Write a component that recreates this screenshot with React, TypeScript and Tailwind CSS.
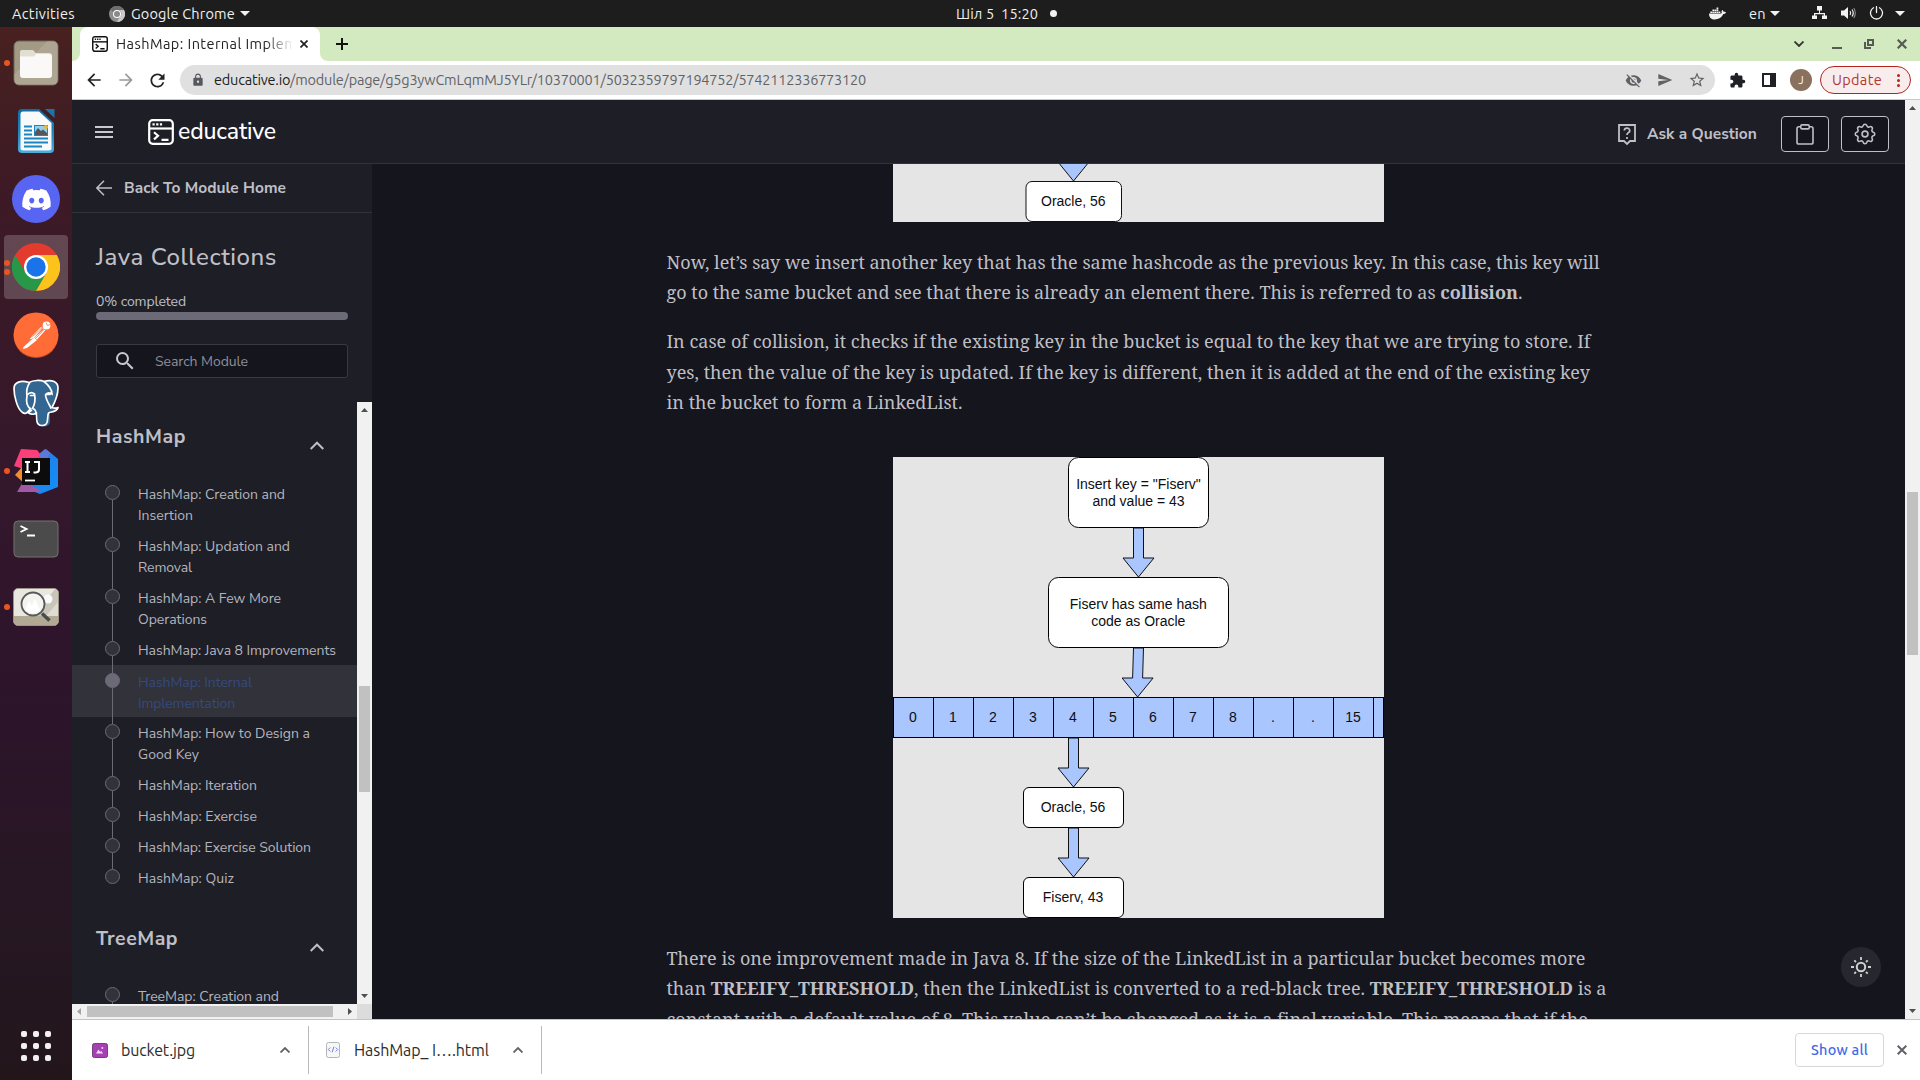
import { useLayoutEffect, useRef, type ReactNode } from "react";
import {
  MdArrowBack,
  MdArrowForward,
  MdExtension,
  MdLock,
  MdRefresh,
  MdSearch,
  MdSend,
  MdStarBorder,
  MdVisibilityOff,
} from "react-icons/md";
import { FaDiscord, FaDocker } from "react-icons/fa";

/** Single line of text whose tracking is adjusted so that it spans `w` pixels. */
function Fit({ w, className = "", children }: { w: number; className?: string; children: ReactNode }) {
  const ref = useRef<HTMLSpanElement>(null);
  useLayoutEffect(() => {
    const el = ref.current;
    if (!el) return;
    el.style.letterSpacing = "0px";
    const n = (el.textContent || "").length;
    el.style.letterSpacing = `${(w - el.getBoundingClientRect().width) / n}px`;
  }, [w]);
  return (
    <span ref={ref} className={`inline-block shrink-0 whitespace-pre ${className}`}>
      {children}
    </span>
  );
}

const UI = "font-['Ubuntu','Noto_Sans',sans-serif]";
const NUNITO = "font-['Nunito_Sans','Nunito','Lato',sans-serif]";

function Caret({ className = "" }: { className?: string }) {
  return (
    <svg className={`shrink-0 ${className}`} width="10" height="5" viewBox="0 0 10 5" fill="#f2f2f2">
      <path d="M0 0h10L5 5z" />
    </svg>
  );
}

function TopBar() {
  return (
    <div className={`flex h-[27px] shrink-0 items-center bg-[#1d1d1d] text-[14.5px] leading-[27px] text-[#f0f0f0] ${UI}`}>
      <div className="flex w-[956px] items-center">
        <Fit w={63} className="ml-3">Activities</Fit>
        <svg className="ml-[34px] shrink-0" width="16" height="16" viewBox="0 0 16 16">
          <circle cx="8" cy="8" r="8" fill="#8f8f8f" />
          <path d="M8 0a8 8 0 0 1 7 4H8a4 4 0 0 0-3.6 2.200L1.500 3.400A8 8 0 0 1 8 0z" fill="#6e6e6e" />
          <path d="M15 4a8 8 0 0 1-7 12l3.400-6A4 4 0 0 0 10.500 4z" fill="#c9c9c9" />
          <circle cx="8" cy="8" r="4" fill="#fff" />
          <circle cx="8" cy="8" r="3" fill="#8a8a8a" />
        </svg>
        <Fit w={104} className="ml-1.5">Google Chrome</Fit>
        <Caret className="ml-[5px]" />
      </div>
      <Fit w={82}>Шіл 5  15:20</Fit>
      <div className="ml-[12px] size-[7px] rounded-full bg-[#f2f2f2]" />
      <div className="ml-auto flex items-center pr-[15px]">
        <FaDocker className="text-[#f2f2f2]" size={17} />
        <Fit w={17} className="ml-[23px]">en</Fit>
        <Caret className="ml-1" />
        <svg className="ml-8 -mt-px" width="15" height="14" viewBox="0 0 15 14" fill="#f2f2f2">
          <path d="M5 0h5v4.500H8V7h5v2.500h2V13h-5V9.500h1.800V8.200H3.200v1.300H5V13H0V9.500h2V7h5V4.500H5z" />
        </svg>
        <svg className="ml-3.5 -mt-px" width="15" height="14" viewBox="0 0 15 14" fill="none" stroke="#f2f2f2" strokeWidth="1.200">
          <path d="M0 4.500h3L7 1v12L3 9.500H0z" fill="#f2f2f2" stroke="none" />
          <path d="M9 5q1.500 2 0 4M11 3.500q2.500 3.500 0 7" />
          <path d="M12.800 2q3 5 0 10" opacity=".5" />
        </svg>
        <svg className="ml-[13px] -mt-px" width="15" height="14" viewBox="0 0 15 14" fill="none" stroke="#f2f2f2" strokeWidth="1.300" strokeLinecap="round">
          <path d="M4.500 1.800a6 6 0 1 0 6 0M7.500 .600v6" />
        </svg>
        <Caret className="ml-[11px]" />
      </div>
    </div>
  );
}

function DockSlot({ dots = 0, active = false, children }: { dots?: number; active?: boolean; children: ReactNode }) {
  return (
    <div className="flex h-[68px] w-full shrink-0 items-center">
      <div className="flex w-1 shrink-0" />
      <div className={`relative flex size-16 items-center justify-center rounded-[4px] ${active ? "bg-white/20" : ""}`}>
        {children}
        <div className="absolute left-0 top-0 flex h-full flex-col justify-center gap-[3px]">
          {dots > 0 && <div className="size-[6px] rounded-full bg-[#e95420]" />}
          {dots > 1 && <div className="size-[6px] rounded-full bg-[#e95420]" />}
        </div>
      </div>
    </div>
  );
}

function Dock() {
  return (
    <div className="flex w-[72px] shrink-0 flex-col bg-[linear-gradient(#48211f,#3d1a25_15%,#35182b_40%,#2d142b_62%,#261723_85%,#22161b)] pt-[2px]">
      <DockSlot dots={1}>
        <svg width="46" height="46" viewBox="0 0 46 46">
          <rect x="1" y="1" width="44" height="44" rx="5" fill="#a39a86" stroke="#6f6758" />
          <path d="M1.500 34L34 1.500h6a4.500 4.500 0 0 1 4.500 4.500v34a4.500 4.500 0 0 1-4.500 4.500H6A4.500 4.500 0 0 1 1.500 40z" fill="#aea692" />
          <path d="M7 15V12q0-2 2-2h10q2 0 2.500 1.500L22.500 13H36q3 0 3 3v3H7z" fill="#e3ded2" />
          <path d="M7 16.500h14l2-2.500h13q3 0 3 3v18q0 3-3 3H10q-3 0-3-3z" fill="#faf9f7" />
        </svg>
      </DockSlot>
      <DockSlot>
        <svg width="38" height="46" viewBox="0 0 38 46">
          <defs>
            <linearGradient id="wr" x1="0" y1="0" x2="0" y2="1">
              <stop offset="0" stopColor="#0f6da4" />
              <stop offset=".55" stopColor="#1f85bd" />
              <stop offset="1" stopColor="#4aafe0" />
            </linearGradient>
          </defs>
          <path d="M5 1h17l15 14v26q0 4-4 4H5q-4 0-4-4V5q0-4 4-4z" fill="url(#wr)" />
          <path d="M6 3.500h16L34.500 15v25q0 2.500-2.500 2.500H6Q3.500 42.500 3.500 40V6q0-2.500 2.500-2.500z" fill="#f7f9fa" />
          <path d="M28 1h9.500v9z" fill="#1a75aa" />
          <path d="M7 18.500h8M7 22.500h8M7 26.500h8M7 30.500h24M7 34.500h24M7 38.500h18" stroke="#1c86c0" strokeWidth="2" />
          <rect x="17" y="17" width="14" height="11" fill="#1c86c0" />
          <rect x="18" y="18" width="12" height="9" fill="#8fd0ef" />
          <path d="M18 27v-3l3-4 3 3 2-1.500 4 3.500v2z" fill="#54565b" />
          <circle cx="29" cy="19" r="2" fill="#f0b72c" />
        </svg>
      </DockSlot>
      <DockSlot>
        <div className="flex size-12 items-center justify-center rounded-full bg-[#5865f2]">
          <FaDiscord size={31} color="#fff" />
        </div>
      </DockSlot>
      <DockSlot dots={2} active>
        <svg width="48" height="48" viewBox="0 0 48 48">
          <circle cx="24" cy="24" r="24" fill="#e33b2e" />
          <path d="M3.200 12A24 24 0 0 0 24 48L34.400 30 24 36 13.600 30z" fill="#279847" />
          <path d="M44.800 12H24l10.400 18L24 48A24 24 0 0 0 44.800 12z" fill="#fcc31c" />
          <circle cx="24" cy="24" r="12" fill="#fff" />
          <circle cx="24" cy="24" r="9.700" fill="#1a73e8" />
        </svg>
      </DockSlot>
      <DockSlot>
        <svg width="46" height="46" viewBox="0 0 46 46">
          <circle cx="23" cy="23.500" r="22.500" fill="#cf4d1d" />
          <circle cx="23" cy="22.700" r="22.300" fill="#ff6c37" />
          <circle cx="33.500" cy="13.500" r="3.900" fill="#fff" />
          <path d="M30 15.500l2.200 3L24 27.500l-2.500-2.300zM28 15l-8.500 8.500-3 4 5-1.700L31 17z" fill="#fff" />
          <path d="M21 25.500l3 2.500L14 36l-4 1 .5-2z" fill="#fff" />
          <path d="M19.500 24.500L29 15.800M22.500 26.500l9-9.500M33 10.500l1.500 3 3-1" stroke="#ff6c37" strokeWidth=".8" fill="none" />
        </svg>
      </DockSlot>
      <DockSlot>
        <svg width="46" height="48" viewBox="0 0 46 48" stroke="#fff" strokeWidth="1.700">
          <path
            d="M9 33C4 30 1 16 1 9.500 1 3 8 1 16 3.500 20 1 28 1 31 2.500 39 0 45 3 45 9c0 7-3 14-6 20l6-.5c0 2-3 5-8 5.500v8c0 3-2 5.500-6 5.500s-6-2-6-5.500v-8c-5 2-9 2-11 0-1 1.500-3 1.500-5-1z"
            fill="#336791"
            stroke="none"
          />
          <path
            d="M9.500 33.500C4 30 1 16 1 9.500 1 3 8 1 16 3.500 20 1 28 1 31 2.500 39 0 45 3 45 9c0 7-3 14-6 19.500 2 .8 4 .7 6 0 0 2-3 4-6.500 4.500-3 .5-3.200 1-3.500 3l-.6 6c-.4 3-2.400 4.500-5.400 4.500s-5-2-5.200-5.500l-.3-7c-2 1.500-5.500 1.500-8.500-.5l4-2.500M9.500 33.500c2 1.500 4 1 5.500-1l3-3.500"
            fill="none"
            strokeLinejoin="round"
          />
          <path
            d="M16.500 4C13 9 13.500 14 14 17c-1 5-1 9 3 12.500M14 16q4-4 7.500-1c1 5 1 9-2 14.500q3 .5 3.500 4M17.500 16.500h3M31 2.500c5 4 8 8 8 12.500q-5-2.500-6.500 1c.5 5 3.500 9 5.500 13M34 15.500h3"
            fill="none"
            strokeLinecap="round"
          />
        </svg>
      </DockSlot>
      <DockSlot dots={1}>
        <svg width="46" height="46" viewBox="0 0 46 46">
          <defs>
            <linearGradient id="ijb" x1="0" y1="0" x2=".6" y2="1">
              <stop offset="0" stopColor="#5a66cc" />
              <stop offset=".6" stopColor="#1a86ee" />
              <stop offset="1" stopColor="#168cf5" />
            </linearGradient>
          </defs>
          <path d="M2 27l8-9 10 4-8 14z" fill="#f58d2e" />
          <path d="M8 1l16 1 8 10L20 24 1 18z" fill="#fb3f78" />
          <path d="M33 1l12 10v28L27 46 12 40 24 20 26 8z" fill="url(#ijb)" />
          <path d="M10 34l18 8-4 2L4 44z" fill="#a05aa8" />
          <path d="M26 6l6-5 5 4-3 6-6 4z" fill="#5c79d8" />
          <rect x="9" y="10" width="28" height="27" fill="#0c0c0c" />
          <path d="M12 14h5M14.500 14v10M12 24h5M21 14h5v7.500q0 3-3.500 3h-2" stroke="#fff" strokeWidth="2" fill="none" />
          <path d="M12 32.500h10" stroke="#fff" strokeWidth="1.800" />
        </svg>
      </DockSlot>
      <DockSlot>
        <svg width="46" height="38" viewBox="0 0 46 38">
          <rect x="1" y="1" width="44" height="36" rx="4" fill="#4b4b4b" stroke="#76706f" />
          <path d="M7.500 6l6 3-6 3M14 15.500h8" stroke="#fff" strokeWidth="1.900" fill="none" />
        </svg>
      </DockSlot>
      <DockSlot dots={1}>
        <svg width="46" height="38" viewBox="0 0 46 38">
          <rect x=".5" y=".5" width="45" height="37" rx="4.500" fill="#e9e8e0" stroke="#9b958a" />
          <path d="M20 28L42 1q3 1 3 5v22z" fill="#c9c5b8" />
          <path d="M33 28l12-14v14z" fill="#dedcd2" />
          <path d="M1 28h44v5q0 4-4 4H5q-4 0-4-4z" fill="#b1a994" />
          <circle cx="35" cy="11" r="4.500" fill="#fafafa" />
          <circle cx="20" cy="16" r="11.500" fill="#f4f4f1" stroke="#57595a" strokeWidth="1.800" />
          <path d="M12 22l4-9 3 5 3-7 5 11q-7 7-15 0z" fill="#fff" />
          <path d="M29 25.500l7.500 7" stroke="#4a4b4b" strokeWidth="3.500" />
        </svg>
      </DockSlot>
      <div className="mb-[19px] mt-auto grid w-[30px] grid-cols-3 gap-[6px] self-center">
        {Array.from({ length: 9 }, (_, i) => (
          <div key={i} className="size-[6px] rounded-[2px] bg-[#f4f0f2]" />
        ))}
      </div>
    </div>
  );
}

function TerminalMark({ size, color, sw }: { size: number; color: string; sw: number }) {
  return (
    <svg className="shrink-0" width={size} height={size} viewBox="0 0 26 26" fill="none" stroke={color} strokeWidth={sw}>
      <rect x="1.200" y="1.200" width="23.600" height="23.600" rx="3.500" />
      <path d="M1 9.500h24" />
      <path d="M4.500 5.300h2.200M8.200 5.300h2.200M11.900 5.300h2.200" />
      <path d="M6 13.200l4 3.600-4 3.600M13.500 20.800h7" />
    </svg>
  );
}

function TabStrip() {
  return (
    <div className={`flex h-[34px] shrink-0 bg-[#d3e9bf] ${UI}`}>
      <div className="flex w-2 items-end bg-white">
        <div className="h-full w-2 rounded-br-lg bg-[#d3e9bf]" />
      </div>
      <div className="bg-white">
        <div className="h-full bg-[#d3e9bf]">
          <div className="flex h-full w-[240px] items-center rounded-t-lg bg-white pl-3">
            <TerminalMark size={16} color="#111" sw={2.300} />
            <div className="ml-2 w-[177px] overflow-hidden text-[14.5px] leading-[34px] text-[#222] [mask-image:linear-gradient(90deg,#000_84%,transparent)]">
              <Fit w={240}>HashMap: Internal Implementation</Fit>
            </div>
            <svg className="ml-[7px] shrink-0" width="8" height="8" viewBox="0 0 8 8" stroke="#222" strokeWidth="1.700">
              <path d="M.5 .5l7 7M7.500 .5l-7 7" />
            </svg>
          </div>
        </div>
      </div>
      <div className="w-2 bg-white">
        <div className="h-full w-2 rounded-bl-lg bg-[#d3e9bf]" />
      </div>
      <svg className="ml-2 self-center" width="12" height="12" viewBox="0 0 12 12" stroke="#111" strokeWidth="2">
        <path d="M6 0v12M0 6h12" />
      </svg>
      <div className="ml-auto flex items-center pr-[13px]">
        <svg width="10" height="6" viewBox="0 0 10 6" fill="none" stroke="#333" strokeWidth="1.800">
          <path d="M.5 .5L5 5 9.500 .5" />
        </svg>
        <div className="ml-7 mt-2 h-[2px] w-[10px] bg-[#555a55]" />
        <svg className="ml-[22px]" width="10" height="10" viewBox="0 0 10 10" fill="none" stroke="#555a55" strokeWidth="2">
          <path d="M4 1h5v5H4zM1 3v6h6" />
        </svg>
        <svg className="ml-[23px]" width="10" height="10" viewBox="0 0 10 10" stroke="#555a55" strokeWidth="2.200">
          <path d="M.7 .7l8.600 8.600M9.300 .7L.7 9.300" />
        </svg>
      </div>
    </div>
  );
}

function Toolbar() {
  return (
    <div className={`flex h-[39px] shrink-0 items-center border-b border-[#c9c9c9] bg-white text-[14.5px] ${UI}`}>
      <MdArrowBack className="ml-3 shrink-0" size={20} color="#222" />
      <MdArrowForward className="ml-3 shrink-0" size={20} color="#9b9b9b" />
      <MdRefresh className="ml-[11px] shrink-0" size={21} color="#222" />
      <div className="ml-3 flex h-[30px] w-[1535px] shrink-0 items-center rounded-full bg-[#e0e0e0] pl-[11px] text-[#5f6368]">
        <MdLock size={14} color="#55585c" />
        <Fit w={652} className="ml-[9px] leading-[30px]">
          <span className="text-[#202124]">educative.io</span>
          /module/page/g5g3ywCmLqmMJ5YLr/10370001/5032359797194752/5742112336773120
        </Fit>
        <MdVisibilityOff className="ml-auto" size={17} />
        <MdSend className="ml-[15px]" size={16} />
        <MdStarBorder className="ml-[15px] mr-[9px]" size={18} />
      </div>
      <MdExtension className="ml-[14px] shrink-0" size={17} color="#202124" />
      <div className="ml-[16px] h-[14px] w-[14px] shrink-0 border-2 border-r-[6px] border-[#202124]" />
      <div className="ml-[14px] flex size-[22px] shrink-0 items-center justify-center rounded-full bg-[#89705f] text-[11px] text-white">J</div>
      <div className="ml-2 flex h-7 w-[91px] shrink-0 items-center rounded-full border border-[#b3261e] bg-[#f9ecec] pl-[11px] text-[#b3362c]">
        <Fit w={50} className="leading-[26px]">Update</Fit>
        <div className="ml-[15px] flex flex-col gap-[2px]">
          <div className="size-[3px] rounded-full bg-[#b3261e]" />
          <div className="size-[3px] rounded-full bg-[#b3261e]" />
          <div className="size-[3px] rounded-full bg-[#b3261e]" />
        </div>
      </div>
    </div>
  );
}

function AppHeader() {
  return (
    <div className={`flex h-16 shrink-0 items-center border-b border-[#32323c] bg-[#1e1e27] text-[#bfbfc6] ${NUNITO}`}>
      <div className="ml-[23px] flex w-[18px] flex-col gap-[3px]">
        <div className="h-[2px] bg-[#c8c8ce]" />
        <div className="h-[2px] bg-[#c8c8ce]" />
        <div className="h-[2px] bg-[#c8c8ce]" />
      </div>
      <div className="ml-[35px] flex items-center">
        <TerminalMark size={26} color="#fff" sw={2.200} />
        <Fit w={98} className="ml-1 mt-px text-[23px] font-medium leading-[30px] text-white">educative</Fit>
      </div>
      <div className="ml-auto mr-4 mt-[5px] flex items-center">
        <svg width="18" height="21" viewBox="0 0 18 21" fill="none" stroke="#bfbfc6" strokeWidth="1.800">
          <path d="M1 1h16v16h-5l-3 3-3-3H1z" />
          <path d="M6.300 6.500a2.700 2.500 0 1 1 3.900 2.300Q9 9.400 9 11M9 13v2" strokeWidth="1.700" />
        </svg>
        <Fit w={110} className="ml-[11px] text-[15.500px] font-bold leading-6">Ask a Question</Fit>
        <div className="ml-6 flex h-9 w-12 items-center justify-center rounded-[4px] border border-[#bfbfc6] bg-[#15151e]">
          <svg width="18" height="21" viewBox="0 0 18 21" fill="none" stroke="#bfbfc6" strokeWidth="1.600">
            <rect x="1" y="2.800" width="16" height="17.200" rx="1.800" />
            <rect x="4.800" y=".9" width="8.400" height="4" rx="1.200" fill="#15151e" />
          </svg>
        </div>
        <div className="ml-3 flex h-9 w-12 items-center justify-center rounded-[4px] border border-[#bfbfc6] bg-[#15151e]">
          <svg width="26" height="26" viewBox="0 0 24 24" fill="none" stroke="#bfbfc6" strokeWidth="1.500" strokeLinecap="round" strokeLinejoin="round">
            <path d="M10.325 4.317c.426-1.756 2.924-1.756 3.350 0a1.724 1.724 0 002.573 1.066c1.543-.94 3.310.826 2.370 2.370a1.724 1.724 0 001.065 2.572c1.756.426 1.756 2.924 0 3.350a1.724 1.724 0 00-1.066 2.573c.94 1.543-.826 3.310-2.370 2.370a1.724 1.724 0 00-2.572 1.065c-.426 1.756-2.924 1.756-3.350 0a1.724 1.724 0 00-2.573-1.066c-1.543.94-3.310-.826-2.370-2.370a1.724 1.724 0 00-1.065-2.572c-1.756-.426-1.756-2.924 0-3.350a1.724 1.724 0 001.066-2.573c-.94-1.543.826-3.310 2.370-2.370.996.608 2.296.07 2.572-1.065z" />
            <circle cx="12" cy="12" r="2.700" />
          </svg>
        </div>
      </div>
    </div>
  );
}

type Item = { lines: [string, number][]; h: string; active?: boolean };

const HASH_ITEMS: Item[] = [
  { lines: [["HashMap: Creation and", 147], ["Insertion", 55]], h: "h-[52px]" },
  { lines: [["HashMap: Updation and", 152], ["Removal", 54]], h: "h-[52px]" },
  { lines: [["HashMap: A Few More", 143], ["Operations", 69]], h: "h-[52px]" },
  { lines: [["HashMap: Java 8 Improvements", 198]], h: "h-[32px]" },
  { lines: [["HashMap: Internal", 114], ["Implementation", 97]], h: "h-[52px]", active: true },
  { lines: [["HashMap: How to Design a", 172], ["Good Key", 61]], h: "h-[52px] -mt-px" },
  { lines: [["HashMap: Iteration", 119]], h: "h-[31px]" },
  { lines: [["HashMap: Exercise", 119]], h: "h-[31px]" },
  { lines: [["HashMap: Exercise Solution", 173]], h: "h-[31px]" },
  { lines: [["HashMap: Quiz", 96]], h: "h-[31px]" },
];
const TREE_ITEMS: Item[] = [{ lines: [["TreeMap: Creation and", 141]], h: "h-[52px]" }];

function Section({ title, w, items, open = false }: { title: string; w: number; items: Item[]; open?: boolean }) {
  return (
    <div className="h-[502px]">
      <div className="flex h-[55px] justify-between pl-6 pr-[33px]">
        <Fit w={w} className="text-[19.500px] font-bold leading-[30px] text-[#bfbfc6]">{title}</Fit>
        <svg className="mt-[19px]" width="14" height="9" viewBox="0 0 14 9" fill="none" stroke="#bfbfc6" strokeWidth="2">
          <path d="M.7 8L7 1.700 13.300 8" />
        </svg>
      </div>
      {items.map((it, i) => (
        <div key={i} className={`flex ${it.h} ${it.active ? "bg-[#32323b]" : ""}`}>
          <div className="ml-[33px] flex w-[15px] flex-col items-center">
            <div className={`h-2 w-px shrink-0 bg-[#6c6a77] ${i === 0 ? "opacity-0" : ""}`} />
            <div className={`size-[15px] shrink-0 rounded-full border border-[#6c6a77] ${it.active ? "bg-[#6c6a77]" : "bg-[#32323b]"}`} />
            <div className={`w-px flex-1 bg-[#6c6a77] ${i === items.length - 1 && !open ? "opacity-0" : ""}`} />
          </div>
          <div className={`ml-[18px] flex flex-col items-start pt-[7px] text-[14px] leading-[21px] ${it.active ? "text-[#324a7c]" : "text-[#b4b4bc]"}`}>
            {it.lines.map(([t, lw]) => (
              <Fit key={t} w={lw}>{t}</Fit>
            ))}
          </div>
        </div>
      ))}
    </div>
  );
}

function Sidebar() {
  return (
    <div className={`flex w-[300px] shrink-0 flex-col bg-[#1e1e27] text-[#bfbfc6] ${NUNITO}`}>
      <div className="flex h-[49px] shrink-0 items-center border-b border-[#32323c] pl-6">
        <svg width="16" height="16" viewBox="0 0 16 16" fill="none" stroke="#bfbfc6" strokeWidth="1.500">
          <path d="M16 8H1M8 .8L.9 8 8 15.200" />
        </svg>
        <Fit w={162} className="ml-3 text-[15.500px] font-bold leading-6">Back To Module Home</Fit>
      </div>
      <div className="flex h-[189px] shrink-0 flex-col items-start pl-6 pt-[28px]">
        <Fit w={181} className="text-[24px] font-medium leading-8">Java Collections</Fit>
        <Fit w={90} className="mt-[19px] text-[14px] leading-5">0% completed</Fit>
        <div className="h-2 w-[252px] rounded-full bg-[#6c6a77]" />
        <div className="mt-6 flex h-[34px] w-[252px] items-center rounded-[3px] border border-[#393943] bg-[#15151e] pl-4">
          <MdSearch size={24} color="#c8c8ce" />
          <Fit w={93} className="ml-[18px] text-[14px] text-[#8f8f98]">Search Module</Fit>
        </div>
      </div>
      <div className="flex h-[602px] shrink-0">
        <div className="w-[285px] overflow-hidden pt-[20px]">
          <Section title="HashMap" w={90} items={HASH_ITEMS} />
          <Section title="TreeMap" w={82} items={TREE_ITEMS} open />
        </div>
        <div className="flex w-[15px] flex-col items-center bg-[#f1f1f1]">
          <ScrollArrow className="mt-[6px]" dir="up" />
          <div className="mt-[274px] h-[106px] w-[11px] bg-[#c1c1c1]" />
          <ScrollArrow className="mb-[6px] mt-auto" dir="down" />
        </div>
      </div>
      <div className="flex h-[15px] shrink-0">
        <div className="flex w-[285px] items-center bg-[#f1f1f1]">
          <svg className="ml-[5px]" width="4" height="7" viewBox="0 0 4 7" fill="#a3a3a3"><path d="M4 0v7L0 3.500z" /></svg>
          <div className="ml-[6px] h-[11px] w-[246px] bg-[#c1c1c1]" />
          <svg className="ml-[15px]" width="4" height="7" viewBox="0 0 4 7" fill="#505050"><path d="M0 0v7l4-3.500z" /></svg>
        </div>
        <div className="w-[15px] bg-[#dcdcdc]" />
      </div>
    </div>
  );
}

function ScrollArrow({ dir, className = "" }: { dir: "up" | "down"; className?: string }) {
  return (
    <svg className={className} width="7" height="4" viewBox="0 0 7 4" fill="#505050">
      <path d={dir === "up" ? "M0 4h7L3.500 0z" : "M0 0h7L3.500 4z"} />
    </svg>
  );
}

const PARA = "h-[30px] leading-[30px]";

function T({ x, y, children }: { x: number; y: number; children: string }) {
  return (
    <text x={x} y={y} textAnchor="middle" fill="#0d0d12" stroke="none" className="font-['Liberation_Sans',Arial,sans-serif] text-[14px]">
      {children}
    </text>
  );
}

/** Block arrow pointing down: shaft centre x, top y, tip y. */
function Arrow({ x, y, tip, skew = 0 }: { x: number; y: number; tip: number; skew?: number }) {
  const s = x + skew;
  return (
    <path
      d={`M${x - 5} ${y}H${x + 5}L${s + 5} ${tip - 19}H${s + 15.500}L${s} ${tip}L${s - 15.500} ${tip - 19}H${s - 5}Z`}
      fill="#a9c6ff"
      stroke="#111"
    />
  );
}

function BucketTop() {
  return (
    <svg className="ml-[521px] shrink-0" width="491" height="58" viewBox="0 0 491 58">
      <rect width="491" height="58" fill="#e5e5e5" />
      <Arrow x={180.500} y={-32} tip={17} />
      <rect x="133" y="17.500" width="95.500" height="40" rx="6" fill="#fff" stroke="#111" />
      <T x={180.300} y={42}>Oracle, 56</T>
    </svg>
  );
}

const CELLS = ["0", "1", "2", "3", "4", "5", "6", "7", "8", ".", ".", "15"];

function BucketDiagram() {
  return (
    <svg className="ml-[521px] mt-[40px] shrink-0" width="491" height="461" viewBox="0 0 491 461">
      <rect width="491" height="461" fill="#e5e5e5" />
      <Arrow x={245.500} y={71} tip={120} />
      <Arrow x={245.500} y={191} tip={240} skew={-0.900} />
      <Arrow x={180.500} y={281} tip={330} />
      <Arrow x={180.500} y={371} tip={420} />
      <g fill="#fff" stroke="#000">
        <rect x="175.500" y=".5" width="140" height="70" rx="10" />
        <rect x="155.500" y="120.500" width="180" height="70" rx="10" />
        <rect x="130.500" y="330.500" width="100" height="40" rx="5.500" />
        <rect x="130.500" y="420.500" width="100" height="40" rx="5.500" />
      </g>
      <T x={245.500} y={32}>Insert key = "Fiserv"</T>
      <T x={245.500} y={49}>and value = 43</T>
      <T x={245.300} y={152}>Fiserv has same hash</T>
      <T x={245.300} y={169}>code as Oracle</T>
      <rect x=".5" y="240.500" width="490" height="40" fill="#a9c6ff" stroke="#000" />
      {CELLS.map((c, i) => (
        <g key={i}>
          <path d={`M${(i + 1) * 40 + 0.500} 240v41`} stroke="#000" />
          <T x={i * 40 + 20} y={265}>{c}</T>
        </g>
      ))}
      <T x={180} y={355}>Oracle, 56</T>
      <T x={180} y={445}>Fiserv, 43</T>
    </svg>
  );
}

function Article() {
  return (
    <div className="relative flex flex-1 flex-col overflow-hidden bg-[#15151e]">
      <BucketTop />
      <div className="ml-[294.500px] flex flex-col items-start pt-[25px] text-[18px] text-[#bfbfc4] [font-stretch:condensed] font-['Noto_Serif','DejaVu_Serif_Condensed','DejaVu_Serif',serif]">
        <Fit w={933} className={PARA}>Now, let’s say we insert another key that has the same hashcode as the previous key. In this case, this key will</Fit>
        <Fit w={856} className={PARA}>go to the same bucket and see that there is already an element there. This is referred to as <b>collision</b>.</Fit>
        <Fit w={924} className={`mt-[19px] ${PARA}`}>In case of collision, it checks if the existing key in the bucket is equal to the key that we are trying to store. If</Fit>
        <Fit w={923} className={`mt-[1px] ${PARA}`}>yes, then the value of the key is updated. If the key is different, then it is added at the end of the existing key</Fit>
        <Fit w={296} className={PARA}>in the bucket to form a LinkedList.</Fit>
      </div>
      <BucketDiagram />
      <div className="ml-[294.500px] flex flex-col items-start pt-[25px] text-[18px] text-[#bfbfc4] [font-stretch:condensed] font-['Noto_Serif','DejaVu_Serif_Condensed','DejaVu_Serif',serif]">
        <Fit w={919} className={PARA}>There is one improvement made in Java 8. If the size of the LinkedList in a particular bucket becomes more</Fit>
        <Fit w={940} className={PARA}>than <b>TREEIFY_THRESHOLD</b>, then the LinkedList is converted to a red-black tree. <b>TREEIFY_THRESHOLD</b> is a</Fit>
        <Fit w={921} className={`mt-[1px] ${PARA}`}>constant with a default value of 8. This value can’t be changed as it is a final variable. This means that if the</Fit>
      </div>
      <div className="absolute bottom-8 right-6 flex size-10 items-center justify-center rounded-full bg-[#27272f]">
        <svg width="20" height="20" viewBox="0 0 20 20" fill="none" stroke="#cfcfd4" strokeWidth="2">
          <circle cx="10" cy="10" r="4.200" />
          <path d="M10 0v3M10 17v3M0 10h3M17 10h3M3.300 3.300l1.700 1.700M15 15l1.700 1.700M3.300 16.700L5 15M15 5l1.700-1.700" strokeWidth="1.800" />
        </svg>
      </div>
    </div>
  );
}

function Chevron({ className = "" }: { className?: string }) {
  return (
    <svg className={className} width="10" height="6" viewBox="0 0 10 6" fill="none" stroke="#5f6368" strokeWidth="1.800">
      <path d="M.5 5.500L5 1l4.500 4.500" />
    </svg>
  );
}

function Downloads() {
  return (
    <div className={`flex h-[61px] shrink-0 items-center border-t border-[#c4c4c4] bg-white text-[16px] text-[#2c2c2c] ${UI}`}>
      <div className="flex h-12 w-[237px] items-center border-r border-[#b9b9b9] pl-5">
        <svg width="16" height="15" viewBox="0 0 16 15">
          <rect x=".5" y=".5" width="15" height="14" rx="1.800" fill="#a640b4" stroke="#6b4672" />
          <path d="M4 10.500l2.500-4L8.200 9l1-1.200 1.800 2.700z" fill="#f3dcf7" />
          <circle cx="10.300" cy="5" r="1" fill="#f3dcf7" />
        </svg>
        <Fit w={74} className="ml-[13px]">bucket.jpg</Fit>
        <Chevron className="ml-auto mr-[18px]" />
      </div>
      <div className="flex h-12 w-[233px] items-center border-r border-[#b9b9b9] pl-[17px]">
        <svg className="-mt-px" width="14" height="16" viewBox="0 0 14 16" fill="none">
          <rect x=".5" y=".5" width="13" height="15" rx="2" fill="#f7f7f8" stroke="#b5b5b8" />
          <path d="M4.300 5.500L2.300 7.500l2 2M9.700 5.500l2 2-2 2M7.800 4.800L6.200 10.200" stroke="#6f7ef0" />
        </svg>
        <Fit w={135} className="ml-[14px]">HashMap_ I….html</Fit>
        <Chevron className="ml-auto mr-[18px]" />
      </div>
      <div className="ml-auto flex h-[34px] w-[89px] items-center justify-center rounded-[4px] border border-[#d6d8dc] text-[14.500px] text-[#4169e8]">
        <Fit w={57} className="-mt-px font-medium">Show all</Fit>
      </div>
      <svg className="ml-[13px] mr-[13px]" width="10" height="10" viewBox="0 0 10 10" stroke="#5f6368" strokeWidth="2">
        <path d="M.7 .7l8.600 8.600M9.300 .7L.7 9.300" />
      </svg>
    </div>
  );
}

export default function App() {
  return (
    <div className="flex h-[1080px] w-[1920px] flex-col overflow-hidden bg-white">
      <TopBar />
      <div className="flex min-h-0 flex-1">
        <Dock />
        <div className="flex w-[1848px] flex-col">
          <TabStrip />
          <Toolbar />
          <div className="flex h-[919px] shrink-0">
            <div className="flex w-[1833px] flex-col">
              <AppHeader />
              <div className="flex h-[855px]">
                <Sidebar />
                <Article />
              </div>
            </div>
            <div className="flex w-[15px] flex-col items-center bg-[#f1f1f1]">
              <ScrollArrow className="mt-[6px]" dir="up" />
              <div className="mt-[382px] h-[163px] w-[11px] bg-[#c1c1c1]" />
              <ScrollArrow className="mb-[6px] mt-auto" dir="down" />
            </div>
          </div>
          <Downloads />
        </div>
      </div>
    </div>
  );
}
